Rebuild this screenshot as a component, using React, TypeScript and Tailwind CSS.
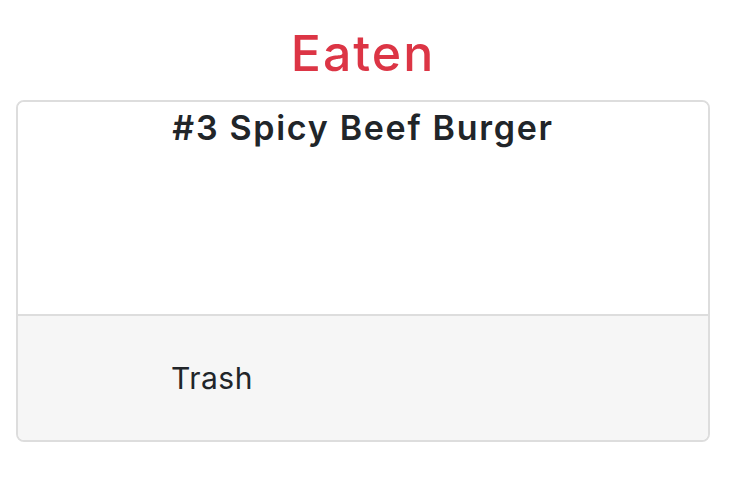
import React from "react";

const App: React.FC = () => {
  return (
    <div className="min-h-[488px] bg-white pt-[18px] px-[16px] font-['Inter',sans-serif] text-[#212529]">
      <h1 className="w-[694px] text-center text-[#dc3545] text-[50px] leading-[70px] font-medium tracking-[2px] mb-[12px]">
        Eaten
      </h1>
      <div className="border-2 border-[#dddddd] rounded-[8px] overflow-hidden w-[694px]">
        <div className="h-[212px] bg-white">
          <h2 className="text-center text-[34px] leading-[52px] font-semibold tracking-[1.7px]">
            #3 Spicy Beef Burger
          </h2>
        </div>
        <div className="h-[126px] border-t-2 border-[#dddddd] bg-[#f6f6f6] flex items-center pl-[153px]">
          <span className="text-[30px] tracking-[0.5px]">Trash</span>
        </div>
      </div>
    </div>
  );
};

export default App;
